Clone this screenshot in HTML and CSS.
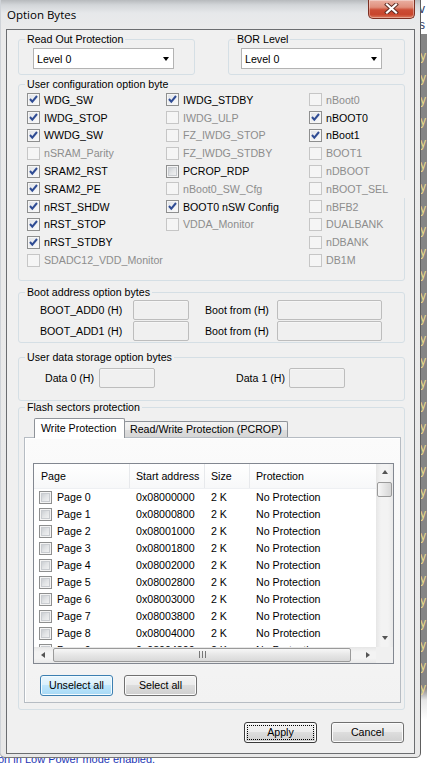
FILE: index.html
```html
<!DOCTYPE html>
<html>
<head>
<meta charset="utf-8">
<title>Option Bytes</title>
<link rel="stylesheet" href="styles.css">
</head>
<body>
<div class="desktop">
  <div class="bg-strip">
    <div class="bg-top">v<br>s</div>
    <div class="bg-ys">y<br>y<br>y<br>y<br>y<br>y<br>y<br>y<br>y<br>y<br>y<br>y<br>y<br>y<br>y<br>y<br>y<br>y<br>y<br>y<br>y<br>y<br>y<br>y<br>y<br>y<br>y<br>y<br>y<br>y</div>
  </div>
  <div class="bg-text">on in Low Power mode enabled.</div>

  <div class="window">
    <div class="titlebar">
      <span class="title">Option Bytes</span>
      <div class="close">
        <svg width="15" height="11" viewBox="0 0 15 11"><path d="M3 1.5 L12 9.5 M12 1.5 L3 9.5" stroke="#5b2a22" stroke-width="4" stroke-linecap="square"/><path d="M3 1.5 L12 9.5 M12 1.5 L3 9.5" stroke="#fff" stroke-width="2.2" stroke-linecap="square"/></svg>
      </div>
    </div>

    <div class="client">
      <div class="row1">
        <fieldset class="group g-half">
          <legend>Read Out Protection</legend>
          <div class="combo c-rop"><span>Level 0</span><span class="arrow"></span></div>
        </fieldset>
        <fieldset class="group g-half">
          <legend>BOR Level</legend>
          <div class="combo c-bor"><span>Level 0</span><span class="arrow"></span></div>
        </fieldset>
      </div>

      <fieldset class="group g-user">
        <legend>User configuration option byte</legend>
        <div class="opt-cols">
          <div class="opt-col c1">
            <div class="opt"><span class="cb on"><svg class="ck" width="11" height="11" viewBox="0 0 11 11"><path d="M2 5 L4.3 7.6 L9 2" fill="none" stroke="#2f4c94" stroke-width="2"/></svg></span>WDG_SW</div>
            <div class="opt"><span class="cb on"><svg class="ck" width="11" height="11" viewBox="0 0 11 11"><path d="M2 5 L4.3 7.6 L9 2" fill="none" stroke="#2f4c94" stroke-width="2"/></svg></span>IWDG_STOP</div>
            <div class="opt"><span class="cb on"><svg class="ck" width="11" height="11" viewBox="0 0 11 11"><path d="M2 5 L4.3 7.6 L9 2" fill="none" stroke="#2f4c94" stroke-width="2"/></svg></span>WWDG_SW</div>
            <div class="opt dis"><span class="cb"></span>nSRAM_Parity</div>
            <div class="opt"><span class="cb on"><svg class="ck" width="11" height="11" viewBox="0 0 11 11"><path d="M2 5 L4.3 7.6 L9 2" fill="none" stroke="#2f4c94" stroke-width="2"/></svg></span>SRAM2_RST</div>
            <div class="opt"><span class="cb on"><svg class="ck" width="11" height="11" viewBox="0 0 11 11"><path d="M2 5 L4.3 7.6 L9 2" fill="none" stroke="#2f4c94" stroke-width="2"/></svg></span>SRAM2_PE</div>
            <div class="opt"><span class="cb on"><svg class="ck" width="11" height="11" viewBox="0 0 11 11"><path d="M2 5 L4.3 7.6 L9 2" fill="none" stroke="#2f4c94" stroke-width="2"/></svg></span>nRST_SHDW</div>
            <div class="opt"><span class="cb on"><svg class="ck" width="11" height="11" viewBox="0 0 11 11"><path d="M2 5 L4.3 7.6 L9 2" fill="none" stroke="#2f4c94" stroke-width="2"/></svg></span>nRST_STOP</div>
            <div class="opt"><span class="cb on"><svg class="ck" width="11" height="11" viewBox="0 0 11 11"><path d="M2 5 L4.3 7.6 L9 2" fill="none" stroke="#2f4c94" stroke-width="2"/></svg></span>nRST_STDBY</div>
            <div class="opt dis"><span class="cb"></span>SDADC12_VDD_Monitor</div>
          </div>
          <div class="opt-col c2">
            <div class="opt"><span class="cb on"><svg class="ck" width="11" height="11" viewBox="0 0 11 11"><path d="M2 5 L4.3 7.6 L9 2" fill="none" stroke="#2f4c94" stroke-width="2"/></svg></span>IWDG_STDBY</div>
            <div class="opt dis"><span class="cb"></span>IWDG_ULP</div>
            <div class="opt dis"><span class="cb"></span>FZ_IWDG_STOP</div>
            <div class="opt dis"><span class="cb"></span>FZ_IWDG_STDBY</div>
            <div class="opt"><span class="cb off"></span>PCROP_RDP</div>
            <div class="opt dis"><span class="cb"></span>nBoot0_SW_Cfg</div>
            <div class="opt"><span class="cb on"><svg class="ck" width="11" height="11" viewBox="0 0 11 11"><path d="M2 5 L4.3 7.6 L9 2" fill="none" stroke="#2f4c94" stroke-width="2"/></svg></span>BOOT0 nSW Config</div>
            <div class="opt dis"><span class="cb"></span>VDDA_Monitor</div>
          </div>
          <div class="opt-col c3">
            <div class="opt dis"><span class="cb"></span>nBoot0</div>
            <div class="opt"><span class="cb on"><svg class="ck" width="11" height="11" viewBox="0 0 11 11"><path d="M2 5 L4.3 7.6 L9 2" fill="none" stroke="#2f4c94" stroke-width="2"/></svg></span>nBOOT0</div>
            <div class="opt"><span class="cb on"><svg class="ck" width="11" height="11" viewBox="0 0 11 11"><path d="M2 5 L4.3 7.6 L9 2" fill="none" stroke="#2f4c94" stroke-width="2"/></svg></span>nBoot1</div>
            <div class="opt dis"><span class="cb"></span>BOOT1</div>
            <div class="opt dis"><span class="cb"></span>nDBOOT</div>
            <div class="opt dis wide"><span class="cb"></span>nBOOT_SEL</div>
            <div class="opt dis"><span class="cb"></span>nBFB2</div>
            <div class="opt dis"><span class="cb"></span>DUALBANK</div>
            <div class="opt dis"><span class="cb"></span>nDBANK</div>
            <div class="opt dis"><span class="cb"></span>DB1M</div>
          </div>
        </div>
      </fieldset>

      <fieldset class="group g-boot">
        <legend>Boot address option bytes</legend>
        <div class="boot-rows">
          <div class="frow"><span class="lbl w93">BOOT_ADD0 (H)</span><span class="tb w56"></span><span class="lbl w72 ml16">Boot from (H)</span><span class="tb w105"></span></div>
          <div class="frow"><span class="lbl w93">BOOT_ADD1 (H)</span><span class="tb w56"></span><span class="lbl w72 ml16">Boot from (H)</span><span class="tb w105"></span></div>
        </div>
      </fieldset>

      <fieldset class="group g-data">
        <legend>User data storage option bytes</legend>
        <div class="data-row">
          <span class="lbl w54">Data 0 (H)</span><span class="tb w56"></span>
          <span class="lbl w53 ml81">Data 1 (H)</span><span class="tb w56"></span>
        </div>
      </fieldset>

      <fieldset class="group g-flash">
        <legend>Flash sectors protection</legend>
        <div class="flash-body">
          <div class="tabs">
            <div class="tab sel">Write Protection</div>
            <div class="tab other">Read/Write Protection (PCROP)</div>
          </div>
          <div class="tabpanel">
            <div class="list">
              <div class="viewport">
                <div class="hdr">
                  <div class="hc col1 first">Page</div>
                  <div class="hc col2">Start address</div>
                  <div class="hc col3">Size</div>
                  <div class="hc col4">Protection</div>
                </div>
                <div class="row"><div class="col1 cell"><span class="cb off"></span>Page 0</div><div class="col2 cell">0x08000000</div><div class="col3 cell">2 K</div><div class="col4 cell">No Protection</div></div>
                <div class="row"><div class="col1 cell"><span class="cb off"></span>Page 1</div><div class="col2 cell">0x08000800</div><div class="col3 cell">2 K</div><div class="col4 cell">No Protection</div></div>
                <div class="row"><div class="col1 cell"><span class="cb off"></span>Page 2</div><div class="col2 cell">0x08001000</div><div class="col3 cell">2 K</div><div class="col4 cell">No Protection</div></div>
                <div class="row"><div class="col1 cell"><span class="cb off"></span>Page 3</div><div class="col2 cell">0x08001800</div><div class="col3 cell">2 K</div><div class="col4 cell">No Protection</div></div>
                <div class="row"><div class="col1 cell"><span class="cb off"></span>Page 4</div><div class="col2 cell">0x08002000</div><div class="col3 cell">2 K</div><div class="col4 cell">No Protection</div></div>
                <div class="row"><div class="col1 cell"><span class="cb off"></span>Page 5</div><div class="col2 cell">0x08002800</div><div class="col3 cell">2 K</div><div class="col4 cell">No Protection</div></div>
                <div class="row"><div class="col1 cell"><span class="cb off"></span>Page 6</div><div class="col2 cell">0x08003000</div><div class="col3 cell">2 K</div><div class="col4 cell">No Protection</div></div>
                <div class="row"><div class="col1 cell"><span class="cb off"></span>Page 7</div><div class="col2 cell">0x08003800</div><div class="col3 cell">2 K</div><div class="col4 cell">No Protection</div></div>
                <div class="row"><div class="col1 cell"><span class="cb off"></span>Page 8</div><div class="col2 cell">0x08004000</div><div class="col3 cell">2 K</div><div class="col4 cell">No Protection</div></div>
                <div class="row"><div class="col1 cell"><span class="cb off"></span>Page 9</div><div class="col2 cell">0x08004800</div><div class="col3 cell">2 K</div><div class="col4 cell">No Protection</div></div>
              </div>
              <div class="vs">
                <div class="sb-btn"><span class="tri up"></span></div>
                <div class="vthumb"></div>
                <div class="sb-fill"></div>
                <div class="sb-btn"><span class="tri down"></span></div>
              </div>
              <div class="hs">
                <div class="sb-btn h"><span class="tri left"></span></div>
                <div class="hthumb"><span class="grip"></span></div>
                <div class="sb-fill"></div>
                <div class="sb-btn h"><span class="tri right"></span></div>
              </div>
              <div class="corner"></div>
            </div>
            <div class="btnrow">
              <div class="btn hot">Unselect all</div>
              <div class="btn">Select all</div>
            </div>
          </div>
        </div>
      </fieldset>

      <div class="footer">
        <div class="btn def">Apply</div>
        <div class="btn">Cancel</div>
      </div>
    </div>
  </div>
</div>
</body>
</html>
```
FILE: styles.css
```css
* { box-sizing: border-box; }
html, body { margin: 0; padding: 0; }
body {
  width: 427px; height: 767px; overflow: hidden; background: #fff;
  font-family: "Liberation Sans", Arial, sans-serif; font-size: 10.65px; color: #000;
}
.desktop { position: relative; width: 427px; height: 767px; overflow: hidden; background: #fff; }

/* background application showing around the dialog */
.bg-strip {
  position: absolute; left: 421px; top: 0; width: 6px; height: 767px; overflow: hidden;
  background: linear-gradient(#fff 0, #fff 34px, #858585 34px, #858585 688px, #e6e6e6 700px, #fff 720px);
  font-size: 12px;
}
.bg-top { color: #2a3560; line-height: 16px; padding-top: 1px; margin-left: -2px; }
.bg-ys { color: #e9d98a; line-height: 21.8px; margin-top: 13px; margin-left: -1px; }
.bg-text {
  position: absolute; left: -2px; top: 753px; font-size: 11px; line-height: 13px;
  color: #1d36b5; white-space: nowrap;
}

/* window */
.window {
  position: absolute; left: 0; top: 0; width: 421px; height: 758px;
  display: flex; flex-direction: column;
  background: linear-gradient(#b7babd 0, #d3d6d9 5px, #e6e8ea 13px, #ebebeb 30px, #e8e8e8 100%);
  border-right: 1px solid #5e5e5e; border-bottom: 1px solid #777;
  border-radius: 0 0 5px 5px;
  box-shadow: inset 1px 0 0 #cfd3d8;
}
.titlebar { height: 29px; flex: none; display: flex; align-items: flex-start; }
.title {
  font-family: "Open Sans", "Noto Sans", sans-serif; font-size: 11.5px; line-height: 16px;
  padding: 7px 0 0 7px; color: #000;
}
.close {
  margin-left: auto; margin-right: 5px; width: 47px; height: 19px;
  border: 1px solid #7c2f22; border-top: none; border-radius: 0 0 5px 5px;
  background: linear-gradient(#eab0a2 0%, #e08f7c 40%, #cc4d35 55%, #c8452c 80%, #dc7a5c 100%);
  display: flex; align-items: center; justify-content: center;
  box-shadow: inset 0 0 0 1px rgba(255,255,255,0.35);
}
.close svg { display: block; margin-top: -1px; }

.client {
  margin-left: 6px; width: 409px; height: 725px; flex: none;
  border: 1px solid #6b6d70; background: #f0f0f0;
  padding: 3px 9px 0 11px;
}

/* group boxes */
.group {
  margin: 0; padding: 0; min-width: 0;
  border: 1px solid #d5dfe5; border-radius: 3px;
}
.group > legend { margin-left: 6px; padding: 0 2px; line-height: 13px; height: 13px; }

.row1 { display: flex; justify-content: space-between; }
.g-half { width: 177px; }
.combo {
  width: 141px; height: 21px; margin: 2px 0 5px 14px;
  border: 1px solid #b3b3b3; background: #fff;
  display: flex; align-items: center; padding-left: 3px;
}
.c-bor { margin-left: 12px; }
.combo .arrow {
  margin-left: auto; margin-right: 4px; width: 0; height: 0;
  border-left: 3.5px solid transparent; border-right: 3.5px solid transparent; border-top: 4px solid #000;
}

.g-user { margin-top: 3px; }
.opt-cols { display: flex; padding: 0 0 11px 8px; }
.c1 { width: 139px; }
.c2 { width: 143px; }
.c3 { flex: 1; }
.opt { display: flex; align-items: center; gap: 4px; height: 17.8px; white-space: nowrap; }
.opt.dis { color: #8d8d8d; }
.opt.wide { margin-right: -3px; background: #f0f0f0; position: relative; }

/* checkboxes */
.cb {
  flex: none; width: 13px; height: 13px; display: block;
  border: 1px solid #c6c6c6; background: #f5f5f5;
}
.cb.on {
  border-color: #8e8f8f;
  background: linear-gradient(135deg, #dfe2e7, #fbfbfb);
  box-shadow: inset 0 0 0 1px #f6f6f6;
}
.cb.off {
  border-color: #8e8f8f;
  background: linear-gradient(135deg, #bfc3c8 0%, #e2e4e6 50%, #f7f7f7 100%);
  box-shadow: inset 0 0 0 1px #f4f4f4, inset 0 0 0 2px #c9ccd0;
}
.ck { display: block; }

/* text fields */
.g-boot { margin-top: 5px; }
.boot-rows { padding: 1px 0 1px 21px; display: flex; flex-direction: column; gap: 1px; }
.frow { display: flex; align-items: center; height: 20px; }
.lbl { flex: none; white-space: nowrap; }
.w93 { width: 93px; }
.w72 { width: 72px; }
.w54 { width: 54px; }
.w53 { width: 53px; }
.ml16 { margin-left: 16px; }
.ml81 { margin-left: 81px; }
.tb {
  flex: none; height: 20px; border: 1px solid #bdbdbd; border-radius: 2px; background: #f0f0f0;
  box-shadow: inset 0 1px 0 #f6f6f6;
}
.w56 { width: 56px; }
.w105 { width: 105px; }

.g-data { margin-top: 8px; }
.data-row { display: flex; align-items: center; padding: 4px 0 12px 26px; }
.data-row .tb { height: 20px; }

/* tabs */
.flash-body { padding: 4px 3px 6px 5px; }
.tabs { display: flex; align-items: flex-end; height: 19px; padding-left: 10px; position: relative; z-index: 1; }
.tab { border: 1px solid #8f9399; border-bottom: none; border-radius: 2px 2px 0 0; white-space: nowrap; }
.tab.sel { width: 91px; height: 20px; margin-bottom: -1px; background: #fff; padding-left: 6px; line-height: 18px; position: relative; z-index: 2; }
.tab.other {
  width: 164px; height: 16px; margin-left: -1px; padding-left: 5px; line-height: 15px;
  background: linear-gradient(#f3f3f3 0%, #ececec 50%, #dfdfdf 50%, #d6d6d6 100%);
}
.tabpanel {
  height: 266px; border: 1px solid #b6bcc3;
  background: linear-gradient(#fbfbfb, #f2f2f2);
  padding: 25px 6px 6px 8px;
  box-shadow: inset 1px 1px 0 #fff;
}

/* list view */
.list {
  width: 361px; height: 201px; border: 1px solid #828790; background: #fff;
  display: grid; grid-template-columns: 1fr 17px; grid-template-rows: 1fr 16px;
}
.viewport { overflow: hidden; min-width: 0; }
.hdr { display: flex; height: 25px; background: linear-gradient(#fff, #f7f8f9); border-bottom: 1px solid #eef0f3; }
.hc { flex: none; line-height: 24px; padding-left: 6px; border-right: 1px solid #e7e9ec; white-space: nowrap; }
.hc.first { padding-left: 7px; }
.col1 { width: 96px; flex: none; }
.col2 { width: 75px; flex: none; }
.col3 { width: 45px; flex: none; }
.col4 { width: 138px; flex: none; }
.hc.col4 { border-right: none; }
.row { display: flex; height: 17px; align-items: center; white-space: nowrap; }
.cell { padding-left: 6px; display: flex; align-items: center; }
.cell.col1 { padding-left: 5px; gap: 5px; }

.vs { display: flex; flex-direction: column; background: linear-gradient(to right, #e6e6e6, #f3f3f3 30%, #f3f3f3 70%, #e9e9e9); }
.hs { display: flex; align-items: stretch; background: linear-gradient(#e6e6e6, #f3f3f3 30%, #f3f3f3 70%, #e9e9e9); }
.sb-btn { flex: none; height: 17px; display: flex; align-items: center; justify-content: center; }
.sb-btn.h { width: 17px; height: auto; }
.sb-fill { flex: 1; }
.tri { width: 0; height: 0; display: block; }
.tri.up { border-left: 3.5px solid transparent; border-right: 3.5px solid transparent; border-bottom: 4px solid #555; }
.tri.down { border-left: 3.5px solid transparent; border-right: 3.5px solid transparent; border-top: 4px solid #555; }
.tri.left { border-top: 3.5px solid transparent; border-bottom: 3.5px solid transparent; border-right: 4px solid #555; }
.tri.right { border-top: 3.5px solid transparent; border-bottom: 3.5px solid transparent; border-left: 4px solid #555; }
.vthumb {
  flex: none; height: 15px; margin: 1px 1px 0 1px; border: 1px solid #9a9a9a; border-radius: 2px;
  background: linear-gradient(to right, #f7f7f7, #e6e6e6 50%, #d6d6d6);
}
.hthumb {
  flex: none; width: 298px; margin: 1px 0 1px 2px; border: 1px solid #9a9a9a; border-radius: 2px;
  background: linear-gradient(#f7f7f7, #e6e6e6 50%, #d9d9d9);
  display: flex; align-items: center; justify-content: center;
}
.grip { width: 7px; height: 7px; display: block; background: repeating-linear-gradient(to right, #777 0 1px, transparent 1px 3px); }
.corner { background: #f0f0f0; }

/* buttons */
.btnrow { display: flex; gap: 11px; margin: 11px 0 0 7px; }
.btn {
  width: 73px; height: 21px; flex: none; text-align: center; line-height: 19px;
  border: 1px solid #707070; border-radius: 3px;
  background: linear-gradient(#f3f3f3 0%, #ebebeb 50%, #dddddd 50%, #cfcfcf 100%);
  box-shadow: inset 0 0 0 1px #fbfbfb;
}
.btn.hot {
  border-color: #3c7fb1;
  background: linear-gradient(#eaf6fd 0%, #d9f0fc 50%, #bee6fd 50%, #a7d9f5 100%);
  box-shadow: inset 0 0 0 1px #f3fbfe;
}
.btn.def { border-color: #3a3a3a; outline: 1px dotted #000; outline-offset: -4px; }
.footer { display: flex; justify-content: flex-end; gap: 14px; margin: 12px 1px 0 0; }
.g-flash { margin-top: 0; }
```
